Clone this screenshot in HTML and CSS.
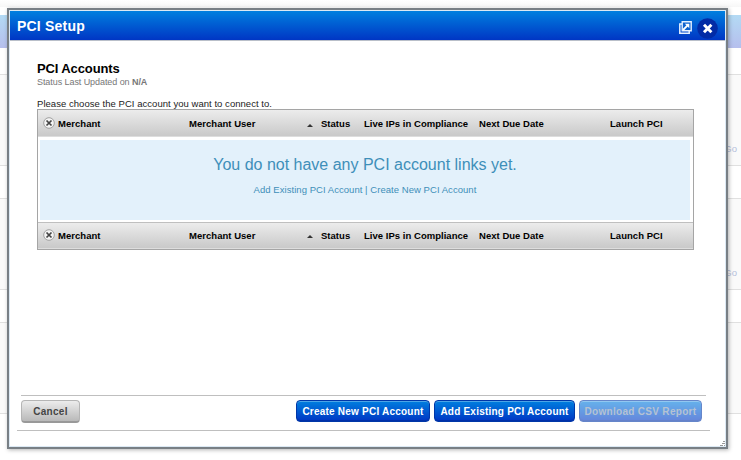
FILE: index.html
```html
<!DOCTYPE html>
<html lang="en">
<head>
<meta charset="utf-8">
<title>PCI Setup</title>
<link rel="stylesheet" href="styles.css">
</head>
<body>
<div class="backdrop">
  <div class="top"></div>
  <div class="gap"></div>
  <div class="band"></div>
  <div class="strip s1"></div>
  <div class="strip s2 tint"><span>Go</span></div>
  <div class="strip s3"></div>
  <div class="strip s2 tint"><span>Go</span></div>
  <div class="strip s3"></div>
  <div class="strip s2 tint"></div>
</div>
<div class="dialog">
  <header class="titlebar">
    <h1>PCI Setup</h1>
    <svg class="popout" width="13" height="13" viewBox="0 0 13 13"><path d="M3.5 3H.8v9.2h9.4V9.8" fill="none" stroke="#e4f0ff" stroke-width="1.5"/><path d="M3.2 .8h9v9h-9z" fill="#0d62cf" stroke="#e4f0ff" stroke-width="1.4"/><path d="M4 9l4.6-4.6" fill="none" stroke="#fff" stroke-width="1.8"/><path d="M5.8 2.8h4.5v4.5z" fill="#fff"/></svg>
    <svg class="close" width="21" height="21" viewBox="0 0 21 21"><circle cx="10.5" cy="10.5" r="10.3" fill="#022ba6"/><path d="M8 7.7l5.4 5.6M13.4 7.7l-5.4 5.6" stroke="#fff" stroke-width="2.9" stroke-linecap="square"/></svg>
  </header>
  <main class="content">
    <h2>PCI Accounts</h2>
    <p class="status">Status Last Updated on <b>N/A</b></p>
    <p class="hint">Please choose the PCI account you want to connect to.</p>
    <section class="table">
      <div class="row head">
        <svg class="clear" width="12" height="12" viewBox="0 0 12 12"><circle cx="6" cy="6" r="5.3" fill="#f4f4f4" stroke="#999" stroke-width=".9"/><path d="M3.5 3.5l5 5M8.5 3.5l-5 5" stroke="#444" stroke-width="1.7"/></svg>
        <span>Merchant</span><span>Merchant User</span><i class="sort"></i><span>Status</span><span>Live IPs in Compliance</span><span>Next Due Date</span><span>Launch PCI</span>
      </div>
      <div class="empty">
        <p class="message">You do not have any PCI account links yet.</p>
        <p class="links"><a>Add Existing PCI Account</a> | <a>Create New PCI Account</a></p>
      </div>
      <div class="row foot">
        <svg class="clear" width="12" height="12" viewBox="0 0 12 12"><circle cx="6" cy="6" r="5.3" fill="#f4f4f4" stroke="#999" stroke-width=".9"/><path d="M3.5 3.5l5 5M8.5 3.5l-5 5" stroke="#444" stroke-width="1.7"/></svg>
        <span>Merchant</span><span>Merchant User</span><i class="sort"></i><span>Status</span><span>Live IPs in Compliance</span><span>Next Due Date</span><span>Launch PCI</span>
      </div>
    </section>
  </main>
  <footer class="actions">
    <button class="cancel">Cancel</button>
    <button class="primary create">Create New PCI Account</button>
    <button class="primary add">Add Existing PCI Account</button>
    <button class="primary report" disabled>Download CSV Report</button>
  </footer>
  <div class="base"></div>
  <svg class="grip" width="6" height="6" viewBox="0 0 6 6"><path d="M3 0h2v1H3zM2 2h1v1H2zM3 2h2v1H3zM0 4h1v1H0zM1 4h2v1H1zM4 4h1v1H4z" fill="#999"/></svg>
</div>
</body>
</html>
```
FILE: styles.css
```css
* { box-sizing: border-box; }
body {
  margin: 0;
  width: 741px;
  height: 460px;
  overflow: hidden;
  position: relative;
  background: #fff;
  font-family: "Liberation Sans", Arial, sans-serif;
}
h1, h2, p { margin: 0; white-space: nowrap; }
.top { height: 7px; background: linear-gradient(#fff, #f7f7f7); }
.gap { height: 8px; }
.band { height: 33px; background: linear-gradient(#b3daf4, #b6bfed); }
.strip { border-bottom: 1px solid #e0e0e0; }
.s1 { height: 27px; }
.s2 { height: 91px; display: flex; justify-content: flex-end; padding: 68px 4px 0 0; }
.s3 { height: 33px; }
.s3 + .s2 { padding-top: 68px; }
.tint { background: #fafafa; }
.strip span { font-size: 9.5px; line-height: 12px; color: #b5c1dc; }

.dialog {
  position: absolute;
  left: 7px;
  top: 8px;
  width: 721px;
  height: 441px;
  border: 2px solid #787f85;
  outline: 1px solid #dce9f4;
  outline-offset: -3px;
  background: #fff;
  box-shadow: 1px 1px 4px rgba(0, 0, 0, .3);
  padding: 1px;
  display: flex;
  flex-direction: column;
}
.titlebar {
  height: 30px;
  flex: none;
  display: flex;
  align-items: center;
  padding: 0 7px 0 7px;
  border-bottom: 1px solid #b9bfc9;
  background: linear-gradient(#007fdf, #0036c4);
}
.titlebar h1 {
  flex: 1;
  font: bold 14px/30px "Liberation Sans", Arial, sans-serif;
  letter-spacing: .2px;
  color: #fff;
}
.popout { margin: 3px 5px 0 0; }
.close { margin-top: 5px; }

.content { width: 657px; margin: 20px 0 0 27px; flex: 1; }
.content h2 { font: bold 13px/16px "Liberation Sans", Arial, sans-serif; letter-spacing: -.12px; color: #000; }
.status { font-size: 9px; line-height: 11px; letter-spacing: -.07px; color: #777; }
.hint { font-size: 9.5px; line-height: 12px; margin-top: 10px; letter-spacing: .04px; color: #222; }
.table { height: 141px; border: 1px solid #a5a5a5; margin-top: -1px; }
.row {
  display: grid;
  grid-template-columns: 15px 131px 118px 14px 43px 115px 131px 60px;
  align-items: center;
  height: 27px;
  padding-left: 5px;
  font: bold 9.5px/12px "Liberation Sans", Arial, sans-serif;
  letter-spacing: .03px;
  color: #000;
  white-space: nowrap;
  background: linear-gradient(#ececec, #c9c9c9);
  border-bottom: 1px solid #ddd;
}
.head { padding-top: 2px; }
.foot { border-top: 1px solid #bfbfbf; }
.clear { margin-bottom: 2px; }
.sort {
  width: 0;
  height: 0;
  margin-top: 2px;
  border: 3px solid transparent;
  border-top: 0;
  border-bottom: 3px solid #333;
}
.empty {
  height: 80px;
  margin: 3px 3px 2px 2px;
  background: #e3f1fb;
  color: #3e8fb9;
  text-align: center;
  padding-top: 15px;
}
.message { font-size: 16px; line-height: 20px; }
.links { font-size: 9.5px; line-height: 12px; margin-top: 9px; letter-spacing: .045px; }

.actions {
  display: flex;
  height: 35px;
  flex: none;
  margin: 0 19px 0 11px;
  border-top: 1px solid #bfbfbf;
  padding-top: 4px;
}
button {
  height: 22px;
  padding: 0;
  border-radius: 4px;
  font: bold 10px/20px "Liberation Sans", Arial, sans-serif;
  white-space: nowrap;
}
.cancel {
  width: 59px;
  height: 23px;
  margin-right: auto;
  padding-top: 1px;
  color: #444;
  border: 1px solid #b5b5b5;
  border-bottom: 2px solid #999;
  background: linear-gradient(#ececec, #b9b9b9);
  letter-spacing: .3px;
}
.primary {
  padding-top: 1px;
  letter-spacing: .22px;
  color: #fff;
  border: 1px solid #0037a8;
  background: linear-gradient(#007fdf, #0036c4);
  box-shadow: inset 0 1px 0 #4ba5e8, inset 0 -1px 0 #0030a8;
  margin-right: 4px;
}
.create { width: 134px; }
.add { width: 141px; }
.report { width: 123px; opacity: .6; color: #859bb5; letter-spacing: .3px; }
.base { flex: none; height: 16px; margin: 0 15px 0 7px; border-top: 1px solid #bfbfbf; }
.grip { position: absolute; right: 0; bottom: 0; }
```
